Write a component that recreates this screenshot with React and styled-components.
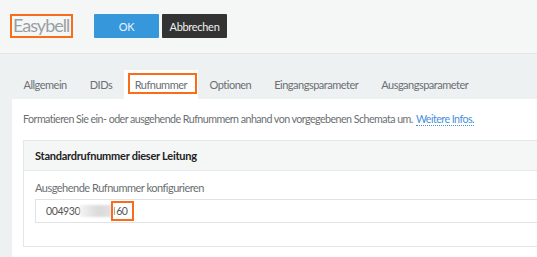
import React from "react";
import styled, { createGlobalStyle } from "styled-components";

const Global = createGlobalStyle`
  html, body { margin: 0; padding: 0; }
  body {
    background: #eef1f2;
    font-family: Lato, "Open Sans", sans-serif;
    color: #555;
    width: 537px;
    height: 257px;
    overflow: hidden;
  }
`;

const Header = styled.header`
  height: 54px;
  box-sizing: border-box;
  background: #f5f7f7;
  border-bottom: 1px solid #e2e6e7;
  display: flex;
  align-items: center;
  padding-left: 10px;
`;

const Brand = styled.div`
  font-size: 18px;
  color: #9a9fa2;
  font-weight: 400;
  border: 2px solid #f86c1a;
  box-sizing: border-box;
  height: 24px;
  width: 63px;
  line-height: 19px;
  padding-left: 1px;
  margin-top: -1px;
  letter-spacing: -1px;
  white-space: nowrap;
  overflow: hidden;
`;

const Button = styled.button`
  height: 24px;
  width: 65px;
  border: 0;
  border-radius: 1px;
  background: ${(p) => (p.$variant === "dark" ? "#333333" : "#3797db")};
  color: ${(p) => (p.$variant === "dark" ? "#f0f0f0" : "#e8f3fb")};
  font-family: inherit;
  font-size: 11px;
  letter-spacing: -0.3px;
  padding: 0;
  margin-left: ${(p) => p.$ml}px;
  margin-top: -1px;
`;

const Tabs = styled.nav`
  display: flex;
  margin-top: 16px;
  padding-left: 12px;
  height: 29px;
`;

const Tab = styled.div`
  padding: 0 ${(p) => (p.$active ? 11 : 11.5)}px;
  display: flex;
  align-items: center;
  font-size: 11px;
  letter-spacing: -0.5px;
  color: #6b6f72;
  background: ${(p) => (p.$active ? "#ffffff" : "transparent")};
  position: relative;
  padding-bottom: 1px;
`;

const TabMark = styled.span`
  position: absolute;
  left: 4px;
  right: 1px;
  top: 3px;
  bottom: 5px;
  border: 2px solid #f86c1a;
`;

const Panel = styled.section`
  margin-left: 12px;
  background: #ffffff;
  padding: 13px 0 0 11px;
  height: 158px;
  box-sizing: border-box;
`;

const Intro = styled.p`
  margin: 0;
  font-size: 10.7px;
  letter-spacing: -0.55px;
  color: #6b6f72;
  line-height: 14px;
  white-space: nowrap;
`;

const Link = styled.a`
  color: #4a90d9;
  text-decoration: none;
  border-bottom: 1px dotted #4a90d9;
  margin-left: 1px;
`;

const Card = styled.div`
  margin-top: 14px;
  border: 1px solid #e4e7e8;
  border-right: 0;
`;

const CardHeader = styled.div`
  background: #f5f6f6;
  border-bottom: 1px solid #e8ebec;
  height: 29px;
  display: flex;
  align-items: center;
  padding-left: 11px;
  font-size: 11px;
  letter-spacing: -0.25px;
  font-weight: 700;
  color: #222;
`;

const CardBody = styled.div`
  padding: 10px 0 23px 11px;
`;

const Label = styled.div`
  font-size: 11px;
  letter-spacing: -0.5px;
  color: #6b6f72;
  line-height: 14px;
`;

const Input = styled.div`
  margin-top: 4px;
  height: 24px;
  box-sizing: border-box;
  border: 1px solid #dfe3e5;
  border-right: 0;
  display: flex;
  align-items: center;
  padding-left: 10px;
  font-size: 10.5px;
  letter-spacing: -0.4px;
  color: #555;
`;

const Blur = styled.span`
  display: inline-block;
  width: 31px;
  height: 12px;
  background: linear-gradient(90deg, #f3f3f3, #dadada 60%, #e2e2e2);
  filter: blur(1px);
`;

const Tail = styled.span`
  position: relative;
  padding-left: 3px;
  padding-right: 6px;
  display: inline-flex;
  align-items: center;
`;

const Tick = styled.span`
  display: inline-block;
  width: 1px;
  height: 8px;
  background: #aaa;
  margin-right: 1px;
`;

const TailMark = styled.span`
  position: absolute;
  left: 0;
  right: 0;
  top: -4px;
  bottom: -4px;
  border: 2px solid #f86c1a;
`;

const tabs = ["Allgemein", "DIDs", "Rufnummer", "Optionen", "Eingangsparameter", "Ausgangsparameter"];

export default function App() {
  return (
    <>
      <Global />
      <Header>
        <Brand>Easybell</Brand>
        <Button $ml={21}>OK</Button>
        <Button $variant="dark" $ml={3}>Abbrechen</Button>
      </Header>
      <Tabs>
        {tabs.map((t) => (
          <Tab key={t} $active={t === "Rufnummer"}>
            {t === "Rufnummer" && <TabMark />}
            {t}
          </Tab>
        ))}
      </Tabs>
      <Panel>
        <Intro>
          Formatieren Sie ein- oder ausgehende Rufnummern anhand von vorgegebenen Schemata um.{" "}
          <Link>Weitere Infos.</Link>
        </Intro>
        <Card>
          <CardHeader>Standardrufnummer dieser Leitung</CardHeader>
          <CardBody>
            <Label>Ausgehende Rufnummer konfigurieren</Label>
            <Input>
              004930
              <Blur />
              <Tail>
                <TailMark />
                <Tick />
                60
              </Tail>
            </Input>
          </CardBody>
        </Card>
      </Panel>
    </>
  );
}
